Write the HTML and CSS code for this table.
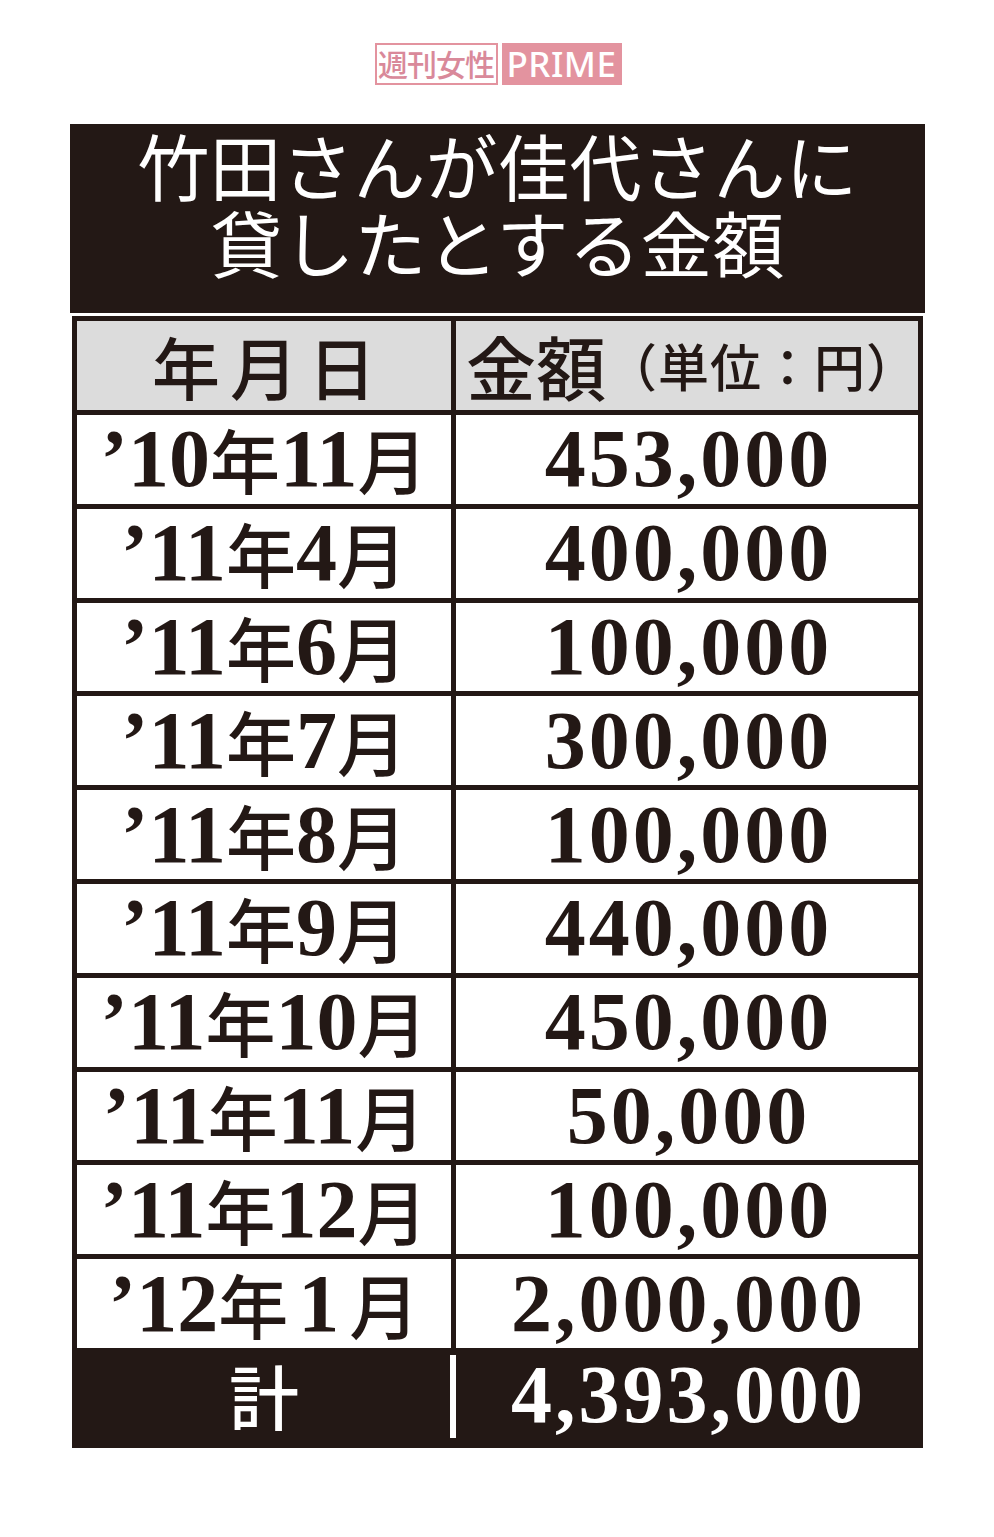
FILE: index.html
```html
<!DOCTYPE html>
<html lang="ja">
<head>
<meta charset="utf-8">
<title>竹田さんが佳代さんに貸したとする金額</title>
<link rel="stylesheet" href="styles.css">
</head>
<body>
<div class="logo">
  <span class="logo-jp">週刊女性</span><span class="logo-en">PRIME</span>
</div>
<div class="title">
  <div class="title-line">竹田さんが佳代さんに</div>
  <div class="title-line">貸したとする金額</div>
</div>
<div class="table">
  <div class="cell head"><span class="hk">年月日</span></div>
  <div class="cell head"><span class="hk2">金額</span><span class="unit">（単位：円）</span></div>

  <div class="cell date">’10<span class="k">年</span>11<span class="k">月</span></div>
  <div class="cell amt">453,000</div>
  <div class="cell date">’11<span class="k">年</span>4<span class="k">月</span></div>
  <div class="cell amt">400,000</div>
  <div class="cell date">’11<span class="k">年</span>6<span class="k">月</span></div>
  <div class="cell amt">100,000</div>
  <div class="cell date">’11<span class="k">年</span>7<span class="k">月</span></div>
  <div class="cell amt">300,000</div>
  <div class="cell date">’11<span class="k">年</span>8<span class="k">月</span></div>
  <div class="cell amt">100,000</div>
  <div class="cell date">’11<span class="k">年</span>9<span class="k">月</span></div>
  <div class="cell amt">440,000</div>
  <div class="cell date">’11<span class="k">年</span>10<span class="k">月</span></div>
  <div class="cell amt">450,000</div>
  <div class="cell date">’11<span class="k">年</span>11<span class="k">月</span></div>
  <div class="cell amt">50,000</div>
  <div class="cell date">’11<span class="k">年</span>12<span class="k">月</span></div>
  <div class="cell amt">100,000</div>
  <div class="cell date">’12<span class="k">年</span><span class="pad">1</span><span class="k">月</span></div>
  <div class="cell amt">2,000,000</div>

  <div class="cell total-label"><span class="k">計</span></div>
  <div class="cell total-amt">4,393,000</div>
</div>
</body>
</html>
```

FILE: styles.css
```css
html, body {
  margin: 0;
  padding: 0;
  background: #ffffff;
}

body {
  width: 994px;
  height: 1537px;
  overflow: hidden;
}

.logo {
  display: flex;
  justify-content: center;
  gap: 4px;
  margin-top: 43px;
  height: 42px;
  padding-left: 2px;
}

.logo-jp {
  box-sizing: border-box;
  width: 123px;
  height: 42px;
  border: 2px solid #e3939f;
  color: #d9899a;
  font-family: "Noto Sans CJK JP", "Noto Sans", sans-serif;
  font-weight: 500;
  font-size: 30px;
  line-height: 37px;
  text-align: center;
  letter-spacing: -1px;
}

.logo-en {
  box-sizing: border-box;
  width: 120px;
  height: 42px;
  background: #e3939f;
  color: #ffffff;
  font-family: "Noto Sans", sans-serif;
  font-weight: 500;
  font-size: 35px;
  line-height: 42px;
  text-align: center;
  letter-spacing: 0.5px;
}

.title {
  box-sizing: border-box;
  margin: 39px 0 0 70px;
  width: 855px;
  height: 189px;
  padding-top: 1px;
  background: #231815;
  color: #ffffff;
  font-family: "Noto Sans CJK JP", "Noto Sans", sans-serif;
  font-weight: 400;
  font-size: 72px;
  line-height: 77px;
  text-align: center;
}

.title-line {
  white-space: nowrap;
}

.table {
  box-sizing: border-box;
  margin: 3px 0 0 72px;
  width: 851px;
  padding: 5px;
  background: #231815;
  display: grid;
  grid-template-columns: 374px 462px;
  grid-template-rows: 89px repeat(10, 88.8px) 90px;
  column-gap: 5px;
  row-gap: 5px;
}

.table .cell:nth-last-child(-n+2) {
  margin-top: -5px;
  height: 95px;
}

.cell {
  display: flex;
  align-items: center;
  justify-content: center;
  background: #ffffff;
  color: #231815;
  font-family: "Liberation Serif", "Noto Sans CJK JP", serif;
  font-weight: 700;
  font-size: 82px;
  line-height: 1;
  white-space: nowrap;
}

.head {
  background: #dcdcdc;
  font-family: "Noto Sans CJK JP", sans-serif;
  font-weight: 500;
}

.hk {
  font-size: 68px;
  letter-spacing: 10px;
  margin-right: -10px;
}

.hk2 {
  font-size: 70px;
  margin-left: 10px;
}

.unit {
  font-size: 51px;
  letter-spacing: 1px;
}

.k {
  font-family: "Noto Sans CJK JP", sans-serif;
  font-weight: 500;
  font-size: 70px;
}

.pad {
  margin: 0 10px;
}

.amt {
  letter-spacing: 3px;
  padding-left: 3px;
}

.total-label {
  background: #231815;
  color: #ffffff;
}

.total-amt {
  background: linear-gradient(#ffffff, #ffffff) left 7px / 6px calc(100% - 12px) no-repeat, #231815;
  margin-left: -6px;
  padding-left: 9px;
  color: #ffffff;
  letter-spacing: 3px;
}
```
